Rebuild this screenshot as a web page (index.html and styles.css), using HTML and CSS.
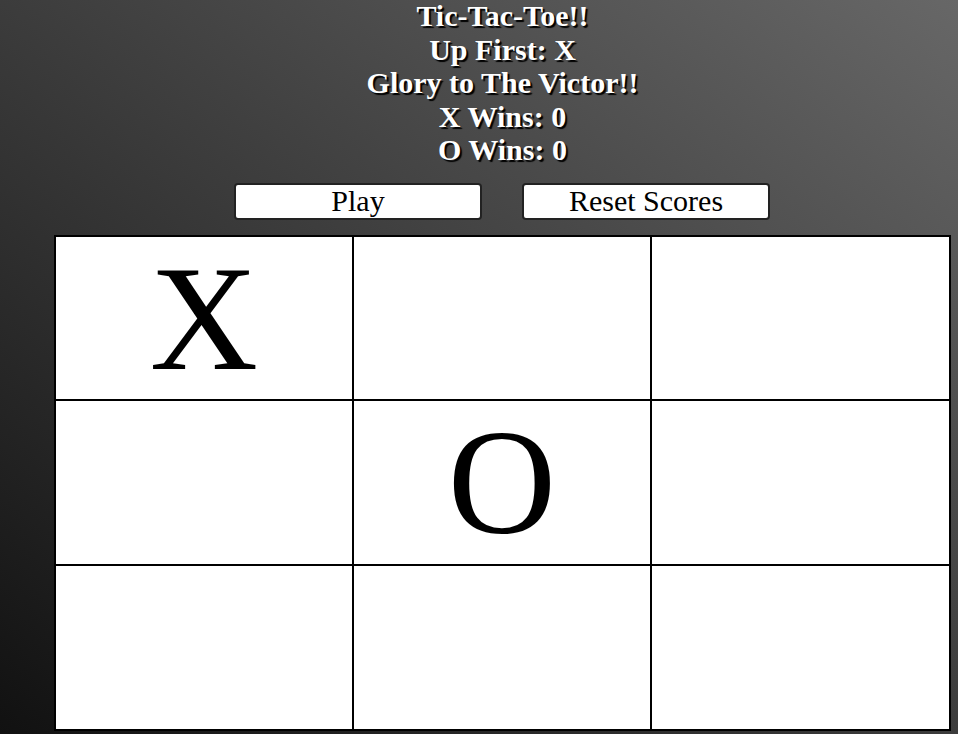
FILE: index.html
```html
<!DOCTYPE html>
<html lang="en">
<head>
<meta charset="utf-8">
<title>Tic-Tac-Toe</title>
<link rel="stylesheet" href="styles.css">
</head>
<body>
<div class="page">
  <header class="info">
    <div class="line">Tic-Tac-Toe!!</div>
    <div class="line">Up First: X</div>
    <div class="line">Glory to The Victor!!</div>
    <div class="line">X Wins: 0</div>
    <div class="line">O Wins: 0</div>
  </header>
  <div class="controls">
    <button class="btn">Play</button>
    <button class="btn">Reset Scores</button>
  </div>
  <div class="board">
    <div class="cell">X</div>
    <div class="cell"></div>
    <div class="cell"></div>
    <div class="cell"></div>
    <div class="cell">O</div>
    <div class="cell"></div>
    <div class="cell"></div>
    <div class="cell"></div>
    <div class="cell"></div>
  </div>
</div>
</body>
</html>
```

FILE: styles.css
```css
html, body {
  margin: 0;
  padding: 0;
  height: 100%;
}
body {
  background: linear-gradient(to top right, #111111, #676767);
  font-family: "Liberation Serif", "Times New Roman", serif;
  overflow: hidden;
}
.page {
  width: 897px;
  margin-left: 54px;
  display: flex;
  flex-direction: column;
  align-items: center;
}
.info {
  margin-top: -1px;
  color: #fff;
  font-weight: bold;
  font-size: 30px;
  line-height: 33.6px;
  text-align: center;
  text-shadow: 2px 2px 1px #000;
}
.controls {
  display: flex;
  gap: 40px;
  margin-top: 16px;
  margin-left: -1px;
}
.btn {
  width: 248px;
  height: 37px;
  padding: 0;
  background: #fff;
  border: 2px solid #222;
  border-radius: 4px;
  font-family: "Liberation Serif", "Times New Roman", serif;
  font-size: 30px;
  line-height: 1;
  color: #000;
}
.board {
  margin-top: 15px;
  align-self: stretch;
  display: grid;
  grid-template-columns: 296px 296px 297px;
  grid-template-rows: 162px 163px 163px;
  gap: 2px;
  padding: 2px;
  background: #000;
}
.cell {
  background: #fff;
  display: flex;
  align-items: center;
  justify-content: center;
  font-size: 150px;
  line-height: 1;
  color: #000;
}
```
